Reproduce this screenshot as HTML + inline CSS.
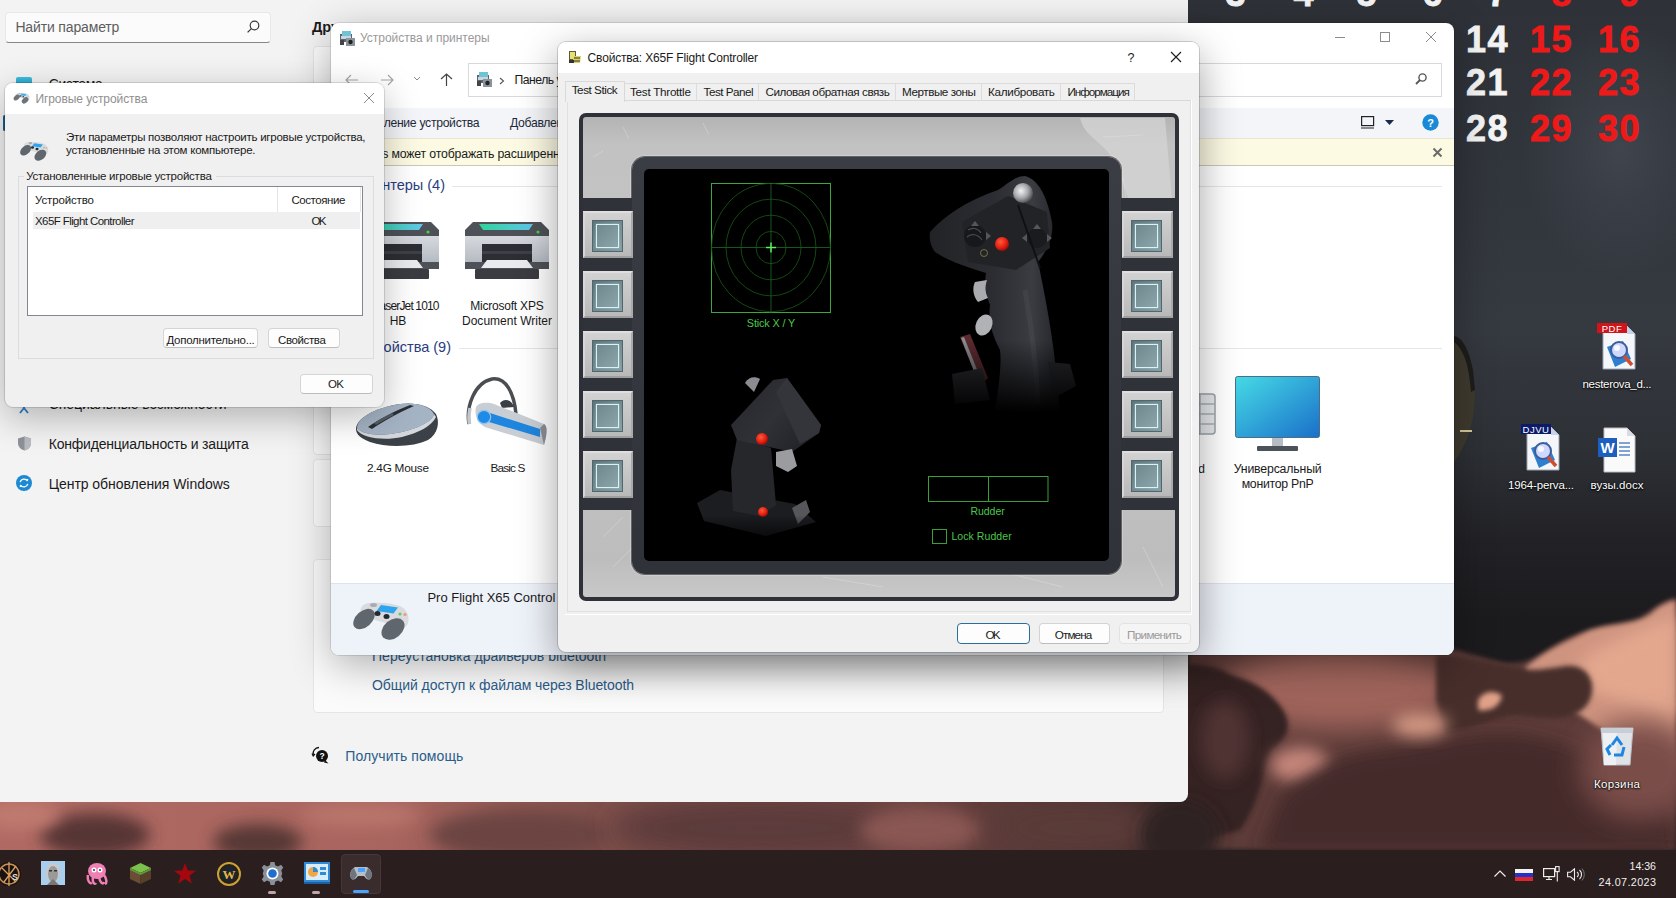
<!DOCTYPE html>
<html><head><meta charset="utf-8">
<style>
*{box-sizing:border-box;margin:0;padding:0}
html,body{width:1676px;height:898px;overflow:hidden}
body{position:relative;font-family:"Liberation Sans",sans-serif;background:#2c3036;color:#000}
.a{position:absolute}
.t{position:absolute;white-space:nowrap;line-height:1}
.win{position:absolute;overflow:hidden}
</style></head>
<body>
<div class="a" style="left:0;top:0;width:1676px;height:898px;background:
 linear-gradient(180deg,#2e3238 0px,#31353c 200px,#353940 330px,#2d3035 450px,#222226 540px,#1b1a1d 620px,#1b1a1d 850px)"></div>
<div class="a" style="left:1520px;top:20px;width:200px;height:260px;background:radial-gradient(ellipse 50% 50% at 50% 50%,rgba(75,82,92,.55),rgba(75,82,92,0))"></div>
<svg class="a" style="left:0;top:560px" width="1676" height="290" viewBox="0 560 1676 290">
<defs>
<filter id="b1" x="-30%" y="-50%" width="160%" height="200%"><feGaussianBlur stdDeviation="8"/></filter>
<filter id="b2" x="-30%" y="-50%" width="160%" height="200%"><feGaussianBlur stdDeviation="2.5"/></filter>
<filter id="b3" x="-30%" y="-50%" width="160%" height="200%"><feGaussianBlur stdDeviation="14"/></filter>
</defs>
<!-- base cloud body right of settings -->
<path d="M1188 650 L1454 650 L1500 662 C1530 668 1545 650 1565 640 C1590 628 1620 624 1640 620 C1655 606 1668 600 1676 598 L1676 850 L1188 850Z" fill="#5c3b38" filter="url(#b2)"/>
<!-- upper salmon band under devices window -->
<ellipse cx="1340" cy="690" rx="120" ry="40" fill="#a0655c" filter="url(#b3)"/>
<!-- bright right cloud -->
<path d="M1525 668 C1545 650 1565 642 1590 630 C1615 622 1640 626 1655 610 C1665 602 1676 600 1676 600 L1676 770 C1650 760 1610 735 1580 715 C1555 700 1530 690 1525 668Z" fill="#cf9480" filter="url(#b2)"/>
<path d="M1580 660 C1610 640 1640 630 1676 615 L1676 720 C1650 712 1615 700 1590 690Z" fill="#e3a78e" filter="url(#b1)"/>
<!-- dark puffs middle right -->
<path d="M1454 655 L1520 668 C1535 672 1550 668 1565 666 C1580 664 1590 672 1592 684 C1594 700 1585 712 1570 716 C1550 722 1530 714 1510 716 C1490 720 1470 728 1445 735 L1436 700 L1436 655Z" fill="#472e2c" filter="url(#b2)"/>
<path d="M1478 700 C1484 690 1496 690 1502 696 C1500 706 1490 712 1478 710Z" fill="#e0a088" filter="url(#b2)"/>
<!-- left dark mass -->
<path d="M1170 665 C1205 662 1220 668 1232 675 C1250 680 1270 690 1282 708 C1292 722 1290 738 1272 750 C1262 770 1262 800 1240 830 L1170 850Z" fill="#352323" filter="url(#b2)"/>
<ellipse cx="1225" cy="740" rx="25" ry="40" fill="#4f3230" filter="url(#b1)"/>
<!-- pink middle gap -->
<ellipse cx="1300" cy="765" rx="30" ry="18" fill="#c4857a" filter="url(#b1)"/>
<!-- lower dark mass -->
<path d="M1282 795 C1300 780 1320 765 1345 758 C1370 750 1400 750 1425 745 C1450 740 1480 730 1520 735 C1560 740 1600 760 1640 780 C1660 795 1676 810 1676 850 L1260 850Z" fill="#452c2a" filter="url(#b1)"/>
<ellipse cx="1420" cy="725" rx="28" ry="12" fill="#d49984" filter="url(#b1)"/>
<ellipse cx="1640" cy="770" rx="60" ry="50" fill="#7a4e49" filter="url(#b3)"/>
<!-- bottom strip under settings -->
<linearGradient id="strip" x1="0" x2="1188" y1="0" y2="0" gradientUnits="userSpaceOnUse"><stop offset="0" stop-color="#b06a63"/><stop offset=".33" stop-color="#a8645e"/><stop offset=".5" stop-color="#80504b"/><stop offset=".75" stop-color="#704643"/><stop offset=".93" stop-color="#4a3230"/><stop offset="1" stop-color="#2e2224"/></linearGradient>
<rect x="0" y="802" width="1188" height="48" fill="url(#strip)"/>
<ellipse cx="95" cy="835" rx="55" ry="22" fill="#563634" filter="url(#b1)"/>
<ellipse cx="258" cy="842" rx="45" ry="18" fill="#573735" filter="url(#b1)"/>
<ellipse cx="20" cy="815" rx="40" ry="14" fill="#c07a70" filter="url(#b1)"/>
<ellipse cx="360" cy="815" rx="60" ry="12" fill="#b9766c" filter="url(#b1)"/>
<ellipse cx="520" cy="835" rx="90" ry="25" fill="#6c4442" filter="url(#b1)"/>
<ellipse cx="760" cy="828" rx="150" ry="30" fill="#5c3b3a" filter="url(#b3)"/>
<ellipse cx="920" cy="830" rx="60" ry="22" fill="#8a5652" filter="url(#b1)"/>
<ellipse cx="1080" cy="828" rx="90" ry="30" fill="#5a3a38" filter="url(#b3)"/>
<ellipse cx="1180" cy="835" rx="40" ry="35" fill="#2e2224" filter="url(#b1)"/>
</svg>
<svg class="a" style="left:1440px;top:320px;" width="50" height="160" viewBox="0 0 50 160"><path d="M14 16 C22 18 31 30 34.5 65 C36 95 30 120 14 142 Z" fill="#3f3a2e"/>
<path d="M14 16 C20 17 28 24 33 50 L35 70 L31 72 C29 45 24 30 14 22Z" fill="#1d1d1b"/>
<path d="M20 111 H32" stroke="#d6c89c" stroke-width="2"/></svg>
<div class="t" style="left:1225.5px;top:-30px;font-size:36px;line-height:48px;color:#f4f4f4;font-weight:bold;letter-spacing:1.5px;-webkit-text-stroke:0.8px #f4f4f4;">3</div>
<div class="t" style="left:1293.5px;top:-30px;font-size:36px;line-height:48px;color:#f4f4f4;font-weight:bold;letter-spacing:1.5px;-webkit-text-stroke:0.8px #f4f4f4;">4</div>
<div class="t" style="left:1356.5px;top:-30px;font-size:36px;line-height:48px;color:#f4f4f4;font-weight:bold;letter-spacing:1.5px;-webkit-text-stroke:0.8px #f4f4f4;">5</div>
<div class="t" style="left:1422.5px;top:-30px;font-size:36px;line-height:48px;color:#f4f4f4;font-weight:bold;letter-spacing:1.5px;-webkit-text-stroke:0.8px #f4f4f4;">6</div>
<div class="t" style="left:1487.5px;top:-30px;font-size:36px;line-height:48px;color:#f4f4f4;font-weight:bold;letter-spacing:1.5px;-webkit-text-stroke:0.8px #f4f4f4;">7</div>
<div class="t" style="left:1551.5px;top:-30px;font-size:36px;line-height:48px;color:#ee1a1a;font-weight:bold;letter-spacing:1.5px;-webkit-text-stroke:0.8px #ee1a1a;">8</div>
<div class="t" style="left:1619.5px;top:-30px;font-size:36px;line-height:48px;color:#ee1a1a;font-weight:bold;letter-spacing:1.5px;-webkit-text-stroke:0.8px #ee1a1a;">9</div>
<div class="t" style="left:1466.0px;top:16px;font-size:36px;line-height:48px;color:#f4f4f4;font-weight:bold;letter-spacing:1.5px;-webkit-text-stroke:0.8px #f4f4f4;">14</div>
<div class="t" style="left:1530.0px;top:16px;font-size:36px;line-height:48px;color:#ee1a1a;font-weight:bold;letter-spacing:1.5px;-webkit-text-stroke:0.8px #ee1a1a;">15</div>
<div class="t" style="left:1598.0px;top:16px;font-size:36px;line-height:48px;color:#ee1a1a;font-weight:bold;letter-spacing:1.5px;-webkit-text-stroke:0.8px #ee1a1a;">16</div>
<div class="t" style="left:1466.0px;top:59px;font-size:36px;line-height:48px;color:#f4f4f4;font-weight:bold;letter-spacing:1.5px;-webkit-text-stroke:0.8px #f4f4f4;">21</div>
<div class="t" style="left:1530.0px;top:59px;font-size:36px;line-height:48px;color:#ee1a1a;font-weight:bold;letter-spacing:1.5px;-webkit-text-stroke:0.8px #ee1a1a;">22</div>
<div class="t" style="left:1598.0px;top:59px;font-size:36px;line-height:48px;color:#ee1a1a;font-weight:bold;letter-spacing:1.5px;-webkit-text-stroke:0.8px #ee1a1a;">23</div>
<div class="t" style="left:1466.0px;top:105px;font-size:36px;line-height:48px;color:#f4f4f4;font-weight:bold;letter-spacing:1.5px;-webkit-text-stroke:0.8px #f4f4f4;">28</div>
<div class="t" style="left:1530.0px;top:105px;font-size:36px;line-height:48px;color:#ee1a1a;font-weight:bold;letter-spacing:1.5px;-webkit-text-stroke:0.8px #ee1a1a;">29</div>
<div class="t" style="left:1598.0px;top:105px;font-size:36px;line-height:48px;color:#ee1a1a;font-weight:bold;letter-spacing:1.5px;-webkit-text-stroke:0.8px #ee1a1a;">30</div>
<svg class="a" style="left:1595px;top:323px" width="46" height="48" viewBox="0 0 46 48">
<path d="M8 3 L32 3 L40 11 L40 46 L8 46Z" fill="#f4f6fa" stroke="#9aa4b4" stroke-width="1"/>
<path d="M32 3 L32 11 L40 11Z" fill="#c5d3ea"/>
<path d="M12 24 L28 18 L36 36 L20 44Z" fill="#2f7fd0"/>
<circle cx="24" cy="27" r="8" fill="#cfd8ff" stroke="#3e5c9a" stroke-width="2"/>
<circle cx="22" cy="25" r="3" fill="#fff" opacity=".8"/>
<path d="M29 33 L37 42" stroke="#d04e30" stroke-width="3.5"/>
<rect x="2" y="0" width="30" height="10" fill="#d0141a"/>
<text x="17" y="8.5" font-size="9.5" fill="#fff" text-anchor="middle" font-family="Liberation Sans" letter-spacing=".5">PDF</text>
</svg>
<svg class="a" style="left:1519px;top:424px" width="46" height="48" viewBox="0 0 46 48">
<path d="M8 3 L32 3 L40 11 L40 46 L8 46Z" fill="#f4f6fa" stroke="#9aa4b4" stroke-width="1"/>
<path d="M32 3 L32 11 L40 11Z" fill="#c5d3ea"/>
<path d="M12 24 L28 18 L36 36 L20 44Z" fill="#2f7fd0"/>
<circle cx="24" cy="27" r="8" fill="#cfd8ff" stroke="#3e5c9a" stroke-width="2"/>
<circle cx="22" cy="25" r="3" fill="#fff" opacity=".8"/>
<path d="M29 33 L37 42" stroke="#d04e30" stroke-width="3.5"/>
<rect x="2" y="0" width="30" height="10" fill="#0c1a6a"/>
<text x="17" y="8.5" font-size="9.5" fill="#fff" text-anchor="middle" font-family="Liberation Sans" letter-spacing=".5">DJVU</text>
</svg>
<svg class="a" style="left:1597px;top:427px" width="40" height="46" viewBox="0 0 40 46">
<path d="M7 1 L30 1 L38 9 L38 45 L7 45Z" fill="#fafafa" stroke="#b8bcc4" stroke-width="1"/>
<path d="M30 1 L30 9 L38 9Z" fill="#d8dce4"/>
<rect x="1" y="11" width="19" height="19" fill="#1d5fbf"/>
<text x="10.5" y="26" font-size="15" font-weight="bold" fill="#fff" text-anchor="middle" font-family="Liberation Sans">W</text>
<path d="M22 16 H33 M22 20 H33 M22 24 H33 M22 28 H33" stroke="#5a86c6" stroke-width="1.3"/>
</svg>
<div class="t" style="left:1582.5px;top:374px;font-size:11.5px;line-height:20px;color:#fff;letter-spacing:-0.299px;text-shadow:0 0 2px #000,0 1px 2px #000;">nesterova_d...</div>
<div class="t" style="left:1508.0px;top:475px;font-size:11.5px;line-height:20px;color:#fff;letter-spacing:-0.147px;text-shadow:0 0 2px #000,0 1px 2px #000;">1964-perva...</div>
<div class="t" style="left:1590.5px;top:475px;font-size:11.5px;line-height:20px;color:#fff;letter-spacing:0.046px;text-shadow:0 0 2px #000,0 1px 2px #000;">вузы.docx</div>
<svg class="a" style="left:1597px;top:725px" width="40" height="42" viewBox="0 0 40 42">
<path d="M4 3 L36 3 L33 40 L7 40Z" fill="#dfe3e8" stroke="#b9bfc6" stroke-width="1"/>
<path d="M4 3 L36 3 L35.5 8 L4.5 8Z" fill="#c8ced6"/>
<path d="M6 8 L20 8 L19 40 L7 40Z" fill="#eef1f4"/>
<path d="M15 20 L20 13 L25 20 M27 22 L25 30 L17 30 M13 30 L10 24 L14 20" stroke="#1f86e0" stroke-width="3" fill="none"/>
</svg>
<div class="t" style="left:1594.0px;top:774px;font-size:11.5px;line-height:20px;color:#fff;letter-spacing:0.366px;text-shadow:0 0 2px #000,0 1px 2px #000;">Корзина</div>
<div class="a" style="left:0px;top:850px;width:1676px;height:48px;background:#2b1e1e"></div>
<div class="a" style="left:341px;top:854px;width:40px;height:40px;background:#3a2c2c;border-radius:4px;border:1px solid #45383a"></div>
<div class="a" style="left:353px;top:890px;width:16px;height:3px;background:#4aa3ff;border-radius:2px"></div>
<div class="a" style="left:268px;top:891px;width:8px;height:3px;background:#bfa5a5;border-radius:2px"></div>
<div class="a" style="left:312px;top:891px;width:8px;height:3px;background:#bfa5a5;border-radius:2px"></div>
<svg class="a" style="left:0;top:860px" width="24" height="28" viewBox="0 0 24 28">
<circle cx="9" cy="14" r="12" fill="#1a1210"/><circle cx="9" cy="14" r="10" fill="none" stroke="#c59055" stroke-width="1.5"/>
<path d="M2 8 L16 22 M16 6 L4 22 M9 2 L9 26" stroke="#d9a062" stroke-width="1.3"/><text x="12" y="20" font-size="9" font-weight="bold" fill="#ddd" font-family="Liberation Sans">S</text></svg>
<svg class="a" style="left:41px;top:861px" width="24" height="24" viewBox="0 0 24 24">
<rect x="0" y="0" width="24" height="24" fill="#a9cfee"/><ellipse cx="12" cy="12" rx="7" ry="10" fill="#c9c9c9"/><ellipse cx="12" cy="13" rx="5" ry="8" fill="#9a9a9a"/><rect x="8" y="9" width="3" height="1.5" fill="#333"/><rect x="13" y="9" width="3" height="1.5" fill="#333"/><path d="M6 24 L12 18 L18 24Z" fill="#777"/></svg>
<svg class="a" style="left:85px;top:861px" width="24" height="24" viewBox="0 0 24 24">
<ellipse cx="12" cy="10" rx="9" ry="8" fill="#f07fb5"/><path d="M3 14 C2 20 5 23 7 22 M8 16 C7 22 10 24 11 22 M14 16 C15 22 18 24 19 21 M19 14 C22 18 22 22 20 23" stroke="#f07fb5" stroke-width="2.5" fill="none"/><circle cx="9" cy="9" r="2.5" fill="#fff"/><circle cx="15" cy="9" r="2.5" fill="#fff"/><circle cx="9" cy="9" r="1" fill="#333"/><circle cx="15" cy="9" r="1" fill="#333"/></svg>
<svg class="a" style="left:129px;top:862px" width="23" height="23" viewBox="0 0 23 23">
<path d="M11.5 1 L22 6 L11.5 11 L1 6Z" fill="#7cbf4c"/><path d="M1 6 L11.5 11 L11.5 22 L1 17Z" fill="#6b4d35"/><path d="M22 6 L11.5 11 L11.5 22 L22 17Z" fill="#574029"/><path d="M1 6 L11.5 11 L22 6 L22 8 L11.5 13 L1 8Z" fill="#5e9c3a"/></svg>
<svg class="a" style="left:173px;top:862px" width="24" height="23" viewBox="0 0 24 23">
<path d="M12 1 L14.8 8.5 L23 8.7 L16.5 13.7 L18.9 21.5 L12 17 L5.1 21.5 L7.5 13.7 L1 8.7 L9.2 8.5Z" fill="#a3080e"/></svg>
<svg class="a" style="left:217px;top:862px" width="24" height="24" viewBox="0 0 24 24">
<circle cx="12" cy="12" r="11" fill="#2a2010" stroke="#c9a23a" stroke-width="2"/><circle cx="12" cy="12" r="8" fill="#1c2432"/><text x="12" y="17" font-size="13" font-weight="bold" fill="#e6b840" text-anchor="middle" font-family="Liberation Serif">W</text></svg>
<svg class="a" style="left:260px;top:861px" width="25" height="25" viewBox="0 0 25 25">
<path d="M10.5 1 H14.5 L15.2 4.3 L18 5.6 L21 3.8 L23.2 6.6 L21.3 9.4 L22.2 12.5 L21.3 15.6 L23.2 18.4 L21 21.2 L18 19.4 L15.2 20.7 L14.5 24 H10.5 L9.8 20.7 L7 19.4 L4 21.2 L1.8 18.4 L3.7 15.6 L2.8 12.5 L3.7 9.4 L1.8 6.6 L4 3.8 L7 5.6 L9.8 4.3Z" fill="#8a9099"/>
<circle cx="12.5" cy="12.5" r="6" fill="#fff"/><circle cx="12.5" cy="12.5" r="4.3" fill="#1f6fd0"/></svg>
<svg class="a" style="left:304px;top:862px" width="26" height="22" viewBox="0 0 26 22">
<rect x="0" y="0" width="26" height="20" fill="#2f8ad8"/><rect x="2" y="2" width="22" height="16" fill="#d8ecfa"/><circle cx="9" cy="10" r="5" fill="#f2a640"/><path d="M9 10 L9 5 A5 5 0 0 1 14 10Z" fill="#2f8ad8"/><rect x="16" y="5" width="6" height="3" fill="#2f8ad8"/><rect x="16" y="10" width="6" height="3" fill="#2f8ad8"/><rect x="0" y="20" width="26" height="2" fill="#1e5fa0"/></svg>
<svg class="a" style="left:349px;top:864px" width="24" height="18" viewBox="0 0 24 18">
<path d="M2 14 C0 10 2 5 6 3 L18 3 C22 5 24 10 22 14 C20 17 17 15 15 12 L9 12 C7 15 4 17 2 14Z" fill="#b8bec6"/>
<path d="M2 14 C0 10 2 6 5 4 L8 11 C6 15 4 17 2 14Z" fill="#6e757e"/><path d="M22 14 C24 10 22 6 19 4 L16 11 C18 15 20 17 22 14Z" fill="#6e757e"/>
<rect x="9" y="4" width="7" height="4" fill="#4aa3ff"/></svg>
<svg class="a" style="left:1493px;top:869px;" width="14" height="9" viewBox="0 0 14 9"><path d="M1.5 7.5 L7 2 L12.5 7.5" stroke="#eee" stroke-width="1.2" fill="none"/></svg>
<svg class="a" style="left:1515px;top:869px;" width="18" height="12" viewBox="0 0 18 12"><rect x="0" y="0" width="18" height="4" fill="#f4f4f4"/><rect x="0" y="4" width="18" height="4" fill="#2432c8"/><rect x="0" y="8" width="18" height="4" fill="#e0262e"/></svg>
<svg class="a" style="left:1543px;top:866px;" width="18" height="16" viewBox="0 0 18 16"><rect x="0.6" y="2.6" width="11" height="8" fill="none" stroke="#eee" stroke-width="1.2"/><path d="M3 13.5 H9 M6 10.6 V13.5" stroke="#eee" stroke-width="1.2"/><rect x="12.6" y="0.6" width="3.5" height="5" fill="none" stroke="#eee" stroke-width="1.1"/><path d="M14.3 5.6 V15.5" stroke="#eee" stroke-width="1.1"/></svg>
<svg class="a" style="left:1567px;top:868px;" width="18" height="13" viewBox="0 0 18 13"><path d="M0.6 4.2 H3.5 L7.5 0.8 V12.2 L3.5 8.8 H0.6Z" fill="none" stroke="#eee" stroke-width="1.1"/><path d="M10 4 A3 3 0 0 1 10 9 M12.5 2 A6 6 0 0 1 12.5 11" stroke="#eee" stroke-width="1.1" fill="none"/><path d="M15 0.5 A9 9 0 0 1 15 12.5" stroke="#777" stroke-width="1" fill="none"/></svg>
<div class="t" style="left:1629.5px;top:856px;font-size:10.6px;line-height:20px;color:#f0f0f0;letter-spacing:-0.007px;">14:36</div>
<div class="t" style="left:1598.5px;top:872px;font-size:10.8px;line-height:20px;color:#f0f0f0;letter-spacing:0.383px;">24.07.2023</div>
<div class="win" style="left:0;top:0;width:1188px;height:802px;background:#f3f3f3;border-bottom-right-radius:8px">
<div class="a" style="left:5px;top:12px;width:266px;height:31px;background:#fbfbfb;border:1px solid #e8e8e8;border-bottom:1px solid #868686;border-radius:4px"></div>
<div class="t" style="left:15.4px;top:17px;font-size:14px;line-height:20px;color:#5d5d5d;letter-spacing:-0.148px;">Найти параметр</div>
<svg class="a" style="left:244px;top:18px;" width="18" height="18" viewBox="0 0 18 18"><circle cx="10.5" cy="7.5" r="4.3" fill="none" stroke="#3a3a3a" stroke-width="1.2"/><line x1="7.4" y1="10.6" x2="3.6" y2="14.4" stroke="#3a3a3a" stroke-width="1.3"/></svg>
<div class="a" style="left:16px;top:77px;width:16px;height:12px;background:linear-gradient(180deg,#3cc0dd,#1b8cc6);border-radius:2px"></div>
<div class="t" style="left:48.7px;top:74px;font-size:14px;line-height:20px;color:#1b1b1b;letter-spacing:-0.397px;">Система</div>
<div class="a" style="left:3px;top:115px;width:3px;height:16px;background:#1f5c8c;border-radius:2px"></div>
<svg class="a" style="left:17px;top:398px;" width="14" height="16" viewBox="0 0 14 16"><circle cx="7" cy="3" r="2" fill="#2a7fc9"/><path d="M1 6 L13 6 M7 6 L7 10 L3 15 M7 10 L11 15" stroke="#2a7fc9" stroke-width="1.8" fill="none"/></svg>
<div class="t" style="left:48.7px;top:394px;font-size:14px;line-height:20px;color:#1b1b1b;letter-spacing:-0.033px;">Специальные возможности</div>
<svg class="a" style="left:17px;top:436px;" width="15" height="15" viewBox="0 0 15 15"><path d="M7.5 0.5 L14 2.5 L14 7 C14 11 11 13.5 7.5 14.5 C4 13.5 1 11 1 7 L1 2.5 Z" fill="#8e9298"/><path d="M7.5 0.5 L14 2.5 L14 7 C14 11 11 13.5 7.5 14.5 Z" fill="#b8bbbf"/></svg>
<div class="t" style="left:48.7px;top:434px;font-size:14px;line-height:20px;color:#1b1b1b;letter-spacing:-0.200px;">Конфиденциальность и защита</div>
<svg class="a" style="left:16px;top:475px;" width="16" height="16" viewBox="0 0 16 16"><circle cx="8" cy="8" r="8" fill="#1b8ad3"/><path d="M4.2 7.2 A4 4 0 0 1 11.5 6" stroke="#fff" stroke-width="1.4" fill="none"/><path d="M11.8 8.8 A4 4 0 0 1 4.5 10" stroke="#fff" stroke-width="1.4" fill="none"/><path d="M10 4.5 L12 6.5 L12.3 3.8Z M6 11.5 L4 9.5 L3.7 12.2Z" fill="#fff"/></svg>
<div class="t" style="left:48.7px;top:474px;font-size:14px;line-height:20px;color:#1b1b1b;letter-spacing:-0.051px;">Центр обновления Windows</div>
<div class="t" style="left:312.0px;top:17px;font-size:14.5px;line-height:20px;color:#1b1b1b;font-weight:bold;">Другие параметры</div>
<div class="a" style="left:313px;top:46px;width:851px;height:52px;background:#fbfbfb;border:1px solid #e5e5e5;border-radius:4px"></div>
<div class="a" style="left:313px;top:400px;width:851px;height:55px;background:#fbfbfb;border:1px solid #e5e5e5;border-radius:4px"></div>
<div class="a" style="left:313px;top:459px;width:851px;height:68px;background:#fbfbfb;border:1px solid #e5e5e5;border-radius:4px"></div>
<div class="a" style="left:313px;top:559px;width:851px;height:154px;background:#fbfbfb;border:1px solid #e5e5e5;border-radius:4px"></div>
<div class="t" style="left:372.0px;top:646px;font-size:14px;line-height:20px;color:#2b5d8b;letter-spacing:0.020px;">Переустановка драйверов bluetooth</div>
<div class="t" style="left:372.0px;top:675px;font-size:14px;line-height:20px;color:#2b5d8b;letter-spacing:-0.066px;">Общий доступ к файлам через Bluetooth</div>
<svg class="a" style="left:311px;top:746px;" width="19" height="19" viewBox="0 0 19 19"><path d="M8 1.5 A6 6 0 0 0 2.2 9" stroke="#111" stroke-width="1.3" fill="none"/><path d="M1 7.5 L2.2 10 L4 8" stroke="#111" stroke-width="1.2" fill="none"/><circle cx="11" cy="10" r="6" fill="#111"/><path d="M14 14 L17.5 17.5 L13 16.5Z" fill="#111"/><text x="11" y="13.3" font-size="8.5" font-weight="bold" fill="#fff" text-anchor="middle" font-family="Liberation Sans">?</text></svg>
<div class="t" style="left:345.3px;top:746px;font-size:14px;line-height:20px;color:#2b5d8b;letter-spacing:0.071px;">Получить помощь</div>
</div>
<div class="win" style="left:331px;top:23px;width:1123px;height:632px;background:#fff;border-radius:8px;box-shadow:0 10px 40px rgba(0,0,0,.30),0 0 0 1px rgba(0,0,0,.10)">
<div class="a" style="left:0;top:0;width:1676px;height:898px;transform:translate(-331px,-23px)">
<svg class="a" style="left:339px;top:30px;" width="17" height="16" viewBox="0 0 17 16"><rect x="1" y="4" width="12" height="8" fill="#5b6470"/><rect x="3" y="1" width="9" height="5" fill="#6fc3d7"/><rect x="2" y="6" width="10" height="3" fill="#cdd5dc"/><rect x="7" y="8" width="9" height="8" fill="#8a939c"/><circle cx="11.5" cy="12" r="2.2" fill="#222"/><rect x="1" y="10" width="4" height="5" fill="#444"/></svg>
<div class="t" style="left:360.0px;top:28px;font-size:12px;line-height:20px;color:#9a9a9a;letter-spacing:-0.019px;">Устройства и принтеры</div>
<div class="a" style="left:1335px;top:37px;width:10px;height:1px;background:#8c8c8c"></div>
<div class="a" style="left:1380px;top:32px;width:10px;height:10px;border:1px solid #8c8c8c"></div>
<svg class="a" style="left:1425px;top:31px;" width="12" height="12" viewBox="0 0 12 12"><path d="M1 1 L11 11 M11 1 L1 11" stroke="#8c8c8c" stroke-width="1"/></svg>
<svg class="a" style="left:345px;top:74px;" width="14" height="12" viewBox="0 0 14 12"><path d="M6 1 L1 6 L6 11 M1 6 H13" stroke="#a6a6a6" stroke-width="1.2" fill="none"/></svg>
<svg class="a" style="left:380px;top:74px;" width="14" height="12" viewBox="0 0 14 12"><path d="M8 1 L13 6 L8 11 M13 6 H1" stroke="#a6a6a6" stroke-width="1.2" fill="none"/></svg>
<svg class="a" style="left:413px;top:76px;" width="8" height="6" viewBox="0 0 8 6"><path d="M1 1 L4 4 L7 1" stroke="#8a8a8a" stroke-width="1" fill="none"/></svg>
<svg class="a" style="left:440px;top:73px;" width="13" height="14" viewBox="0 0 13 14"><path d="M1 6 L6.5 1 L12 6 M6.5 1 V13" stroke="#444" stroke-width="1.2" fill="none"/></svg>
<div class="a" style="left:468px;top:63px;width:680px;height:34px;border:1px solid #d9d9d9;background:#fff"></div>
<svg class="a" style="left:476px;top:71px;" width="17" height="16" viewBox="0 0 17 16"><rect x="1" y="4" width="12" height="8" fill="#5b6470"/><rect x="3" y="1" width="9" height="5" fill="#6fc3d7"/><rect x="2" y="6" width="10" height="3" fill="#cdd5dc"/><rect x="7" y="8" width="9" height="8" fill="#8a939c"/><circle cx="11.5" cy="12" r="2.2" fill="#222"/><rect x="1" y="10" width="4" height="5" fill="#444"/></svg>
<svg class="a" style="left:499px;top:77px;" width="6" height="8" viewBox="0 0 6 8"><path d="M1 1 L4.5 4 L1 7" stroke="#555" stroke-width="1.1" fill="none"/></svg>
<div class="t" style="left:514.6px;top:70px;font-size:12.2px;line-height:20px;color:#1a1a1a;letter-spacing:-0.520px;">Панель управления</div>
<div class="a" style="left:1160px;top:63px;width:282px;height:34px;border:1px solid #d9d9d9;background:#fff"></div>
<svg class="a" style="left:1414px;top:72px;" width="14" height="14" viewBox="0 0 14 14"><circle cx="8.5" cy="5.5" r="3.6" fill="none" stroke="#555" stroke-width="1.4"/><path d="M6 8 L2 12" stroke="#555" stroke-width="1.8"/></svg>
<div class="a" style="left:331px;top:108px;width:1123px;height:30px;background:#f3f5f8"></div>
<div class="t" style="left:350.3px;top:113px;font-size:12.2px;line-height:20px;color:#1e2a3a;letter-spacing:-0.300px;">Добавление устройства</div>
<div class="t" style="left:510.0px;top:113px;font-size:12.2px;line-height:20px;color:#1e2a3a;letter-spacing:-0.309px;">Добавление принтера</div>
<svg class="a" style="left:1361px;top:116px;" width="14" height="13" viewBox="0 0 14 13"><rect x="0.6" y="0.6" width="12" height="9" fill="none" stroke="#222" stroke-width="1.2"/><path d="M0 12 H13" stroke="#222" stroke-width="1.2"/></svg>
<svg class="a" style="left:1385px;top:120px;" width="9" height="6" viewBox="0 0 9 6"><path d="M0 0 H9 L4.5 5Z" fill="#1a2a4a"/></svg>
<svg class="a" style="left:1422px;top:114px;" width="17" height="17" viewBox="0 0 17 17"><circle cx="8.5" cy="8.5" r="8.2" fill="#1a8ad6"/><text x="8.5" y="13" font-size="11" font-weight="bold" fill="#fff" text-anchor="middle" font-family="Liberation Sans">?</text></svg>
<div class="a" style="left:331px;top:138px;width:1123px;height:28px;background:#fcfae3;border-bottom:1px solid #c9c7b6;border-top:1px solid #e8e6d0"></div>
<div class="t" style="left:339.5px;top:144px;font-size:12.3px;line-height:20px;color:#1a1a1a;letter-spacing:-0.166px;">Windows может отображать расширенные сведения об устройствах</div>
<svg class="a" style="left:1432px;top:147px;" width="11" height="11" viewBox="0 0 11 11"><path d="M1.5 1.5 L9.5 9.5 M9.5 1.5 L1.5 9.5" stroke="#6a6a6a" stroke-width="2"/></svg>
<div class="t" style="left:355.6px;top:175px;font-size:14.5px;line-height:20px;color:#2a3d80;">Принтеры (4)</div>
<div class="a" style="left:452px;top:186px;width:990px;height:1px;background:#e3e6ea"></div>
<div class="t" style="left:353.4px;top:337px;font-size:14.5px;line-height:20px;color:#2a3d80;">Устройства (9)</div>
<div class="a" style="left:459px;top:348px;width:983px;height:1px;background:#e3e6ea"></div>
<svg class="a" style="left:355px;top:222px;" width="84" height="58" viewBox="0 0 84 58">
<defs><linearGradient id="pslot" x1="0" x2="1"><stop offset="0" stop-color="#2fd29a"/><stop offset="1" stop-color="#62c7ea"/></linearGradient>
<linearGradient id="pbody" x1="0" x2="0" y1="0" y2="1"><stop offset="0" stop-color="#d6dadf"/><stop offset="1" stop-color="#b5bbc2"/></linearGradient></defs>
<path d="M8 0 H76 L84 8 V14 H0 V8Z" fill="#4e5157"/>
<path d="M14 2 H68 L64 8 H18Z" fill="url(#pslot)"/>
<circle cx="73" cy="10" r="1.6" fill="#3fd24a"/>
<rect x="0" y="14" width="84" height="26" fill="url(#pbody)"/>
<rect x="17" y="22" width="50" height="18" fill="#2c2e33"/>
<rect x="17" y="29" width="50" height="3" fill="#3d4046"/>
<rect x="0" y="40" width="84" height="7" fill="#4e5157"/>
<path d="M22 38 H62 L68 46 H16Z" fill="#e9ebee"/>
<rect x="10" y="47" width="64" height="10" rx="1" fill="#3a3c41"/>
</svg>
<svg class="a" style="left:465px;top:222px;" width="84" height="58" viewBox="0 0 84 58">
<defs><linearGradient id="pslot" x1="0" x2="1"><stop offset="0" stop-color="#2fd29a"/><stop offset="1" stop-color="#62c7ea"/></linearGradient>
<linearGradient id="pbody" x1="0" x2="0" y1="0" y2="1"><stop offset="0" stop-color="#d6dadf"/><stop offset="1" stop-color="#b5bbc2"/></linearGradient></defs>
<path d="M8 0 H76 L84 8 V14 H0 V8Z" fill="#4e5157"/>
<path d="M14 2 H68 L64 8 H18Z" fill="url(#pslot)"/>
<circle cx="73" cy="10" r="1.6" fill="#3fd24a"/>
<rect x="0" y="14" width="84" height="26" fill="url(#pbody)"/>
<rect x="17" y="22" width="50" height="18" fill="#2c2e33"/>
<rect x="17" y="29" width="50" height="3" fill="#3d4046"/>
<rect x="0" y="40" width="84" height="7" fill="#4e5157"/>
<path d="M22 38 H62 L68 46 H16Z" fill="#e9ebee"/>
<rect x="10" y="47" width="64" height="10" rx="1" fill="#3a3c41"/>
</svg>
<div class="t" style="left:356.5px;top:296px;font-size:12px;line-height:20px;color:#1a1a1a;letter-spacing:-0.856px;">HP LaserJet 1010</div>
<div class="t" style="left:389.7px;top:311px;font-size:12px;line-height:20px;color:#1a1a1a;">HB</div>
<div class="t" style="left:470.2px;top:296px;font-size:12px;line-height:20px;color:#1a1a1a;letter-spacing:-0.210px;">Microsoft XPS</div>
<div class="t" style="left:462.0px;top:311px;font-size:12px;line-height:20px;color:#1a1a1a;letter-spacing:0.014px;">Document Writer</div>
<svg class="a" style="left:354px;top:402px;" width="86" height="46" viewBox="0 0 86 46">
<path d="M2 27 C2 17 20 6 46 2 C62 0 76 4 82 12 C86 20 84 32 74 38 C60 45 34 46 16 40 C6 36 2 32 2 27Z" fill="#3c4148"/>
<path d="M3 26 C3 16 20 6 46 2 C62 0 76 4 80 12 C78 20 64 26 48 30 C30 34 10 34 3 26Z" fill="#a5b4c5"/>
<path d="M3 26 C10 34 30 34 48 30 C64 26 78 20 80 12 L82 15 C78 24 64 31 48 35 C30 39 8 36 3 28Z" fill="#d3d8de"/>
<path d="M14 25 C24 18 40 9 56 3 L60 4 C44 11 28 20 18 27Z" fill="#2b2f35"/>
<path d="M20 21 C26 17 32 14 38 11 L40 13 C34 16 28 19 22 23Z" fill="#565c64"/>
</svg>
<div class="t" style="left:367.0px;top:458px;font-size:11.8px;line-height:20px;color:#1a1a1a;letter-spacing:-0.253px;">2.4G Mouse</div>
<svg class="a" style="left:466px;top:377px;" width="82" height="70" viewBox="0 0 82 70">
<path d="M3 47 C0 30 8 6 26 2 C40 0 48 16 50 37" stroke="#4a4d52" stroke-width="3.5" fill="none"/>
<path d="M3.5 47 C2.5 42 3 36 4 31" stroke="#c2c6cb" stroke-width="3.5" fill="none"/>
<path d="M34 26 C38 21 45 22 48 30 L36 31Z" fill="#3b3e44"/>
<path d="M10 30 C13 25 22 25 28 27 L78 47 C81 49 81 53 80 60 L78 68 L22 51 C12 48 8 38 10 30Z" fill="#c9ced4"/>
<path d="M78 47 C81 49 81 53 80 60 L78 68 L74 51Z" fill="#8b9097"/>
<path d="M24 36 L74 52 L74 60 L23 45Z" fill="#1e86df"/>
<circle cx="18" cy="40" r="6.7" fill="#1e8be6" stroke="#8fc4f2" stroke-width="1.2"/>
</svg>
<div class="t" style="left:490.5px;top:458px;font-size:11.8px;line-height:20px;color:#1a1a1a;letter-spacing:-0.834px;">Basic S</div>
<svg class="a" style="left:1180px;top:393px;" width="36" height="42" viewBox="0 0 36 42"><rect x="1" y="1" width="34" height="40" rx="3" fill="#e6e8eb" stroke="#9ca2a9" stroke-width="1.5"/><path d="M1 11 H35 M1 21 H35 M1 31 H35 M20 1 V41" stroke="#a7adb4" stroke-width="1.5"/></svg>
<div class="t" style="left:1147.6px;top:459px;font-size:12px;line-height:20px;color:#1a1a1a;left:auto;right:471px">Keyboard</div>
<svg class="a" style="left:1235px;top:376px;" width="85" height="75" viewBox="0 0 85 75"><defs><linearGradient id="mscr" x1="0" y1="0" x2="1" y2="1"><stop offset="0" stop-color="#46dbe6"/><stop offset="1" stop-color="#1a6fc9"/></linearGradient></defs>
<rect x="0.5" y="0.5" width="84" height="61" rx="2" fill="url(#mscr)" stroke="#4a6f86" stroke-width="1"/>
<rect x="37" y="62" width="11" height="9" fill="#b6bcc3"/>
<rect x="22" y="70" width="41" height="5" rx="1" fill="#4c525a"/></svg>
<div class="t" style="left:1233.7px;top:459px;font-size:12.3px;line-height:20px;color:#1a1a1a;letter-spacing:-0.174px;">Универсальный</div>
<div class="t" style="left:1241.7px;top:474px;font-size:12.3px;line-height:20px;color:#1a1a1a;letter-spacing:-0.281px;">монитор PnP</div>
<div class="a" style="left:331px;top:583px;width:1123px;height:72px;background:#eef2f9;border-top:1px solid #dde3ec"></div>
<svg class="a" style="left:345px;top:595px;" width="70" height="55" viewBox="345 595 70 55">
<path d="M371 603 C380 602 392 603 400 606 C406 609 409 614 408.5 620 C408 626 405 629 400 627 L375 620 C366 618 358 614 361 608 C363 604 367 603 371 603Z" fill="#d9dbdf"/>
<ellipse cx="364" cy="619" rx="8" ry="12.5" transform="rotate(48 364 619)" fill="#5f666d"/>
<ellipse cx="393" cy="629" rx="9" ry="13" transform="rotate(50 393 629)" fill="#5f666d"/>
<path d="M381 605 L398 607.5 L393.5 613.5 L376.5 611Z" fill="#2ea3ef"/>
<ellipse cx="377.5" cy="613.5" rx="3" ry="2.5" fill="#26282c"/>
<ellipse cx="386.5" cy="616.5" rx="3" ry="2.5" fill="#26282c"/>
<ellipse cx="373.5" cy="605" rx="3.5" ry="2" fill="#a9adb2"/>
<circle cx="400" cy="614" r="1.6" fill="#6c6"/><circle cx="405" cy="614.5" r="1.6" fill="#e98"/></svg>
<div class="t" style="left:427.4px;top:588px;font-size:13px;line-height:20px;color:#1a1a1a;">Pro Flight X65 Control Panel</div>
</div></div>
<div class="win" style="left:5px;top:83px;width:379px;height:324px;background:#f0f0f0;border-radius:8px;box-shadow:0 10px 36px rgba(0,0,0,.28),0 0 0 1px rgba(0,0,0,.12)">
<div class="a" style="left:0;top:0;width:1676px;height:898px;transform:translate(-5px,-83px)">
<div class="a" style="left:5px;top:83px;width:379px;height:31px;background:#fff"></div>
<svg class="a" style="left:13px;top:91px;opacity:.9" width="17" height="13" viewBox="351 599 59 40">
<path d="M371 603 C380 602 392 603 400 606 C406 609 409 614 408.5 620 C408 626 405 629 400 627 L375 620 C366 618 358 614 361 608 C363 604 367 603 371 603Z" fill="#d9dbdf"/>
<ellipse cx="364" cy="619" rx="8" ry="12.5" transform="rotate(48 364 619)" fill="#5f666d"/>
<ellipse cx="393" cy="629" rx="9" ry="13" transform="rotate(50 393 629)" fill="#5f666d"/>
<path d="M381 605 L398 607.5 L393.5 613.5 L376.5 611Z" fill="#2ea3ef"/>
<ellipse cx="377.5" cy="613.5" rx="3" ry="2.5" fill="#26282c"/>
<ellipse cx="386.5" cy="616.5" rx="3" ry="2.5" fill="#26282c"/>
<ellipse cx="373.5" cy="605" rx="3.5" ry="2" fill="#a9adb2"/>
<circle cx="400" cy="614" r="1.6" fill="#6c6"/><circle cx="405" cy="614.5" r="1.6" fill="#e98"/></svg>
<div class="t" style="left:35.4px;top:89px;font-size:12px;line-height:20px;color:#8f8f8f;letter-spacing:-0.070px;">Игровые устройства</div>
<svg class="a" style="left:363px;top:92px;" width="12" height="12" viewBox="0 0 12 12"><path d="M1 1 L11 11 M11 1 L1 11" stroke="#8a8a8a" stroke-width="1"/></svg>
<svg class="a" style="left:19px;top:140px;" width="30" height="21" viewBox="351 599 59 41">
<path d="M371 603 C380 602 392 603 400 606 C406 609 409 614 408.5 620 C408 626 405 629 400 627 L375 620 C366 618 358 614 361 608 C363 604 367 603 371 603Z" fill="#d9dbdf"/>
<ellipse cx="364" cy="619" rx="8" ry="12.5" transform="rotate(48 364 619)" fill="#5f666d"/>
<ellipse cx="393" cy="629" rx="9" ry="13" transform="rotate(50 393 629)" fill="#5f666d"/>
<path d="M381 605 L398 607.5 L393.5 613.5 L376.5 611Z" fill="#2ea3ef"/>
<ellipse cx="377.5" cy="613.5" rx="3" ry="2.5" fill="#26282c"/>
<ellipse cx="386.5" cy="616.5" rx="3" ry="2.5" fill="#26282c"/>
<ellipse cx="373.5" cy="605" rx="3.5" ry="2" fill="#a9adb2"/>
<circle cx="400" cy="614" r="1.6" fill="#6c6"/><circle cx="405" cy="614.5" r="1.6" fill="#e98"/></svg>
<div class="t" style="left:66.0px;top:127px;font-size:11.5px;line-height:20px;color:#1a1a1a;letter-spacing:-0.251px;">Эти параметры позволяют настроить игровые устройства,</div>
<div class="t" style="left:66.0px;top:140px;font-size:11.5px;line-height:20px;color:#1a1a1a;letter-spacing:-0.232px;">установленные на этом компьютере.</div>
<div class="a" style="left:17.5px;top:176px;width:356px;height:183px;border:1px solid #dcdcdc"></div>
<div class="a" style="left:24px;top:170px;width:192px;height:12px;background:#f0f0f0"></div>
<div class="t" style="left:26.3px;top:166px;font-size:11.5px;line-height:20px;color:#1a1a1a;letter-spacing:-0.232px;">Установленные игровые устройства</div>
<div class="a" style="left:27px;top:186px;width:336px;height:130px;background:#fff;border:1px solid #828790"></div>
<div class="a" style="left:277px;top:187px;width:1px;height:25px;background:#e5e5e5"></div>
<div class="a" style="left:360px;top:187px;width:1px;height:25px;background:#e5e5e5"></div>
<div class="t" style="left:35.0px;top:190px;font-size:11.5px;line-height:20px;color:#1a1a1a;letter-spacing:-0.129px;">Устройство</div>
<div class="t" style="left:291.4px;top:190px;font-size:11.5px;line-height:20px;color:#1a1a1a;letter-spacing:-0.423px;">Состояние</div>
<div class="a" style="left:33px;top:212px;width:327px;height:17px;background:#efefef"></div>
<div class="t" style="left:35.0px;top:211px;font-size:11.5px;line-height:20px;color:#1a1a1a;letter-spacing:-0.588px;">X65F Flight Controller</div>
<div class="t" style="left:311.4px;top:211px;font-size:11.5px;line-height:20px;color:#1a1a1a;letter-spacing:-1.616px;">OK</div>
<div class="a" style="left:163px;top:328px;width:95px;height:20px;background:#fdfdfd;border:1px solid #d5d5d5;border-bottom-color:#bdbdbd;border-radius:4px"></div>
<div class="t" style="left:166.4px;top:330px;font-size:11.5px;line-height:20px;color:#1a1a1a;letter-spacing:-0.264px;">Дополнительно...</div>
<div class="a" style="left:267.5px;top:328px;width:72px;height:20px;background:#fdfdfd;border:1px solid #d5d5d5;border-bottom-color:#bdbdbd;border-radius:4px"></div>
<div class="t" style="left:278.0px;top:330px;font-size:11.5px;line-height:20px;color:#1a1a1a;letter-spacing:-0.385px;">Свойства</div>
<div class="a" style="left:300px;top:374px;width:72.5px;height:20px;background:#fdfdfd;border:1px solid #d5d5d5;border-bottom-color:#bdbdbd;border-radius:4px"></div>
<div class="t" style="left:328.0px;top:374px;font-size:11.5px;line-height:20px;color:#1a1a1a;letter-spacing:-0.616px;">OK</div>
</div></div>
<div class="win" style="left:558px;top:42px;width:641px;height:610px;background:#f0f0f0;border-radius:8px;box-shadow:0 12px 40px rgba(0,0,0,.38),0 0 0 1px rgba(0,0,0,.16)">
<div class="a" style="left:0;top:0;width:1676px;height:898px;transform:translate(-558px,-42px)">
<div class="a" style="left:558px;top:42px;width:641px;height:31px;background:#fff"></div>
<svg class="a" style="left:568px;top:50px;" width="14" height="14" viewBox="0 0 14 14"><rect x="1" y="1" width="7" height="9" fill="#5a5a3a"/><rect x="2" y="2" width="5" height="7" fill="#e8e070"/><path d="M6 6 L13 6 L12 13 L4 13Z" fill="#d9d160"/><path d="M6 8 L12 8 M5 11 L12 11" stroke="#333" stroke-width="1"/><rect x="1" y="10" width="5" height="3" fill="#333"/></svg>
<div class="t" style="left:587.6px;top:48px;font-size:12px;line-height:20px;color:#1a1a1a;letter-spacing:-0.180px;">Свойства: X65F Flight Controller</div>
<div class="t" style="left:1127.5px;top:48px;font-size:12.5px;line-height:20px;color:#1a1a1a;">?</div>
<svg class="a" style="left:1170px;top:51px;" width="12" height="12" viewBox="0 0 12 12"><path d="M1 1 L11 11 M11 1 L1 11" stroke="#1a1a1a" stroke-width="1.1"/></svg>
<div class="a" style="left:564.5px;top:100px;width:627px;height:515px;border-right:1px solid #fff;border-bottom:1px solid #fff"></div>
<div class="a" style="left:567px;top:100px;width:624px;height:512px;border:1px solid #e0e0e0;border-top-color:#d9d9d9;background:#f0f0f0"></div>
<div class="a" style="left:565px;top:80.5px;width:60px;height:21px;background:#f0f0f0;border:1px solid #d9d9d9;border-bottom:none"></div>
<div class="t" style="left:571.7px;top:80px;font-size:11.7px;line-height:20px;color:#1a1a1a;letter-spacing:-0.451px;">Test Stick</div>
<div class="a" style="left:625px;top:82.5px;width:72px;height:18.5px;background:#f0f0f0;border:1px solid #dcdcdc;border-left:none;border-bottom:1px solid #d9d9d9"></div>
<div class="t" style="left:630.0px;top:82px;font-size:11.7px;line-height:20px;color:#1a1a1a;letter-spacing:-0.264px;">Test Throttle</div>
<div class="a" style="left:697px;top:82.5px;width:62px;height:18.5px;background:#f0f0f0;border:1px solid #dcdcdc;border-left:none;border-bottom:1px solid #d9d9d9"></div>
<div class="t" style="left:703.6px;top:82px;font-size:11.7px;line-height:20px;color:#1a1a1a;letter-spacing:-0.515px;">Test Panel</div>
<div class="a" style="left:759px;top:82.5px;width:137px;height:18.5px;background:#f0f0f0;border:1px solid #dcdcdc;border-left:none;border-bottom:1px solid #d9d9d9"></div>
<div class="t" style="left:765.5px;top:82px;font-size:11.7px;line-height:20px;color:#1a1a1a;letter-spacing:-0.464px;">Силовая обратная связь</div>
<div class="a" style="left:896px;top:82.5px;width:86px;height:18.5px;background:#f0f0f0;border:1px solid #dcdcdc;border-left:none;border-bottom:1px solid #d9d9d9"></div>
<div class="t" style="left:902.0px;top:82px;font-size:11.7px;line-height:20px;color:#1a1a1a;letter-spacing:-0.454px;">Мертвые зоны</div>
<div class="a" style="left:982px;top:82.5px;width:79px;height:18.5px;background:#f0f0f0;border:1px solid #dcdcdc;border-left:none;border-bottom:1px solid #d9d9d9"></div>
<div class="t" style="left:988.0px;top:82px;font-size:11.7px;line-height:20px;color:#1a1a1a;letter-spacing:-0.319px;">Калибровать</div>
<div class="a" style="left:1061px;top:82.5px;width:73.5px;height:18.5px;background:#f0f0f0;border:1px solid #dcdcdc;border-left:none;border-bottom:1px solid #d9d9d9"></div>
<div class="t" style="left:1067.4px;top:82px;font-size:11.7px;line-height:20px;color:#1a1a1a;letter-spacing:-1.004px;">Информация</div>
<div class="a" style="left:956.5px;top:623px;width:73.5px;height:21px;background:#fdfdfd;border:1.5px solid #2a6e99;border-radius:4px"></div>
<div class="t" style="left:985.5px;top:625px;font-size:11.7px;line-height:20px;color:#1a1a1a;letter-spacing:-1.905px;">OK</div>
<div class="a" style="left:1038.5px;top:623px;width:71.5px;height:21px;background:#fdfdfd;border:1px solid #d3d3d3;border-bottom-color:#bcbcbc;border-radius:4px"></div>
<div class="t" style="left:1054.8px;top:625px;font-size:11.7px;line-height:20px;color:#1a1a1a;letter-spacing:-0.896px;">Отмена</div>
<div class="a" style="left:1119px;top:623px;width:71.5px;height:21px;background:#f5f5f5;border:1px solid #e2e2e2;border-radius:4px"></div>
<div class="t" style="left:1127.0px;top:625px;font-size:11.7px;line-height:20px;color:#9a9a9a;letter-spacing:-0.682px;">Применить</div>
<div class="a" style="left:579px;top:113px;width:600px;height:488px;background:#2e3137;border-radius:7px"></div>
<div class="a" style="left:583px;top:117px;width:592px;height:480px;background:linear-gradient(180deg,#b4b4b4 0%,#c2c2c2 6%,#c4c4c4 50%,#bdbdbd 92%,#c8c8c8 100%);border-radius:3px"></div>
<svg class="a" style="left:583px;top:117px;" width="592" height="480" viewBox="0 0 592 480"><path d="M497 1 L582 1 L589 81 L545 81 C538 60 532 40 520 30 C510 20 500 15 497 1Z" fill="#d4d4d4" opacity=".75"/>
<g opacity=".35" stroke="#e8e8e8" stroke-width="1">
<path d="M10 40 L20 34 M40 10 L46 22 M120 6 L126 18 M520 20 L560 18 M540 60 L548 120 M570 200 L560 260 M20 420 L40 400 M30 450 L50 430 M240 460 L300 470 M420 455 L480 470 M560 430 L580 470"/>
</g>
</svg>
<div class="a" style="left:632px;top:157px;width:489px;height:417px;background:linear-gradient(180deg,#3a3d44,#2f3238);border-radius:13px;box-shadow:0 0 0 1px rgba(30,30,35,.6),0 0 0 2px rgba(230,230,230,.35)"></div>
<div class="a" style="left:583px;top:198px;width:49px;height:312px;background:#2f3238"></div>
<div class="a" style="left:1121px;top:198px;width:54px;height:312px;background:#2f3238"></div>
<div class="a" style="left:644px;top:169px;width:465px;height:392px;background:#000;border-radius:5px"></div>
<div class="a" style="left:583px;top:211px;width:50px;height:47px;background:linear-gradient(180deg,#d2d2d2,#b9b9b9);border-top:2px solid #dedede;border-left:2px solid #d6d6d6;border-right:2px solid #a9a9a9;border-bottom:2px solid #9f9f9f"></div>
<div class="a" style="left:592px;top:220px;width:31px;height:32px;background:linear-gradient(135deg,#5e7479,#86a0a6);border:1px solid #52676c"></div>
<div class="a" style="left:596px;top:224px;width:23px;height:24px;border:1.5px solid #d9f2f6;background:linear-gradient(135deg,#6f888d,#8ba5aa);box-shadow:0 0 2px rgba(200,240,255,.6)"></div>
<div class="a" style="left:1122px;top:211px;width:51px;height:47px;background:linear-gradient(180deg,#d2d2d2,#b9b9b9);border-top:2px solid #dedede;border-left:2px solid #d6d6d6;border-right:2px solid #a9a9a9;border-bottom:2px solid #9f9f9f"></div>
<div class="a" style="left:1131px;top:220px;width:31px;height:32px;background:linear-gradient(135deg,#5e7479,#86a0a6);border:1px solid #52676c"></div>
<div class="a" style="left:1135px;top:224px;width:23px;height:24px;border:1.5px solid #d9f2f6;background:linear-gradient(135deg,#6f888d,#8ba5aa);box-shadow:0 0 2px rgba(200,240,255,.6)"></div>
<div class="a" style="left:583px;top:271px;width:50px;height:47px;background:linear-gradient(180deg,#d2d2d2,#b9b9b9);border-top:2px solid #dedede;border-left:2px solid #d6d6d6;border-right:2px solid #a9a9a9;border-bottom:2px solid #9f9f9f"></div>
<div class="a" style="left:592px;top:280px;width:31px;height:32px;background:linear-gradient(135deg,#5e7479,#86a0a6);border:1px solid #52676c"></div>
<div class="a" style="left:596px;top:284px;width:23px;height:24px;border:1.5px solid #d9f2f6;background:linear-gradient(135deg,#6f888d,#8ba5aa);box-shadow:0 0 2px rgba(200,240,255,.6)"></div>
<div class="a" style="left:1122px;top:271px;width:51px;height:47px;background:linear-gradient(180deg,#d2d2d2,#b9b9b9);border-top:2px solid #dedede;border-left:2px solid #d6d6d6;border-right:2px solid #a9a9a9;border-bottom:2px solid #9f9f9f"></div>
<div class="a" style="left:1131px;top:280px;width:31px;height:32px;background:linear-gradient(135deg,#5e7479,#86a0a6);border:1px solid #52676c"></div>
<div class="a" style="left:1135px;top:284px;width:23px;height:24px;border:1.5px solid #d9f2f6;background:linear-gradient(135deg,#6f888d,#8ba5aa);box-shadow:0 0 2px rgba(200,240,255,.6)"></div>
<div class="a" style="left:583px;top:331px;width:50px;height:47px;background:linear-gradient(180deg,#d2d2d2,#b9b9b9);border-top:2px solid #dedede;border-left:2px solid #d6d6d6;border-right:2px solid #a9a9a9;border-bottom:2px solid #9f9f9f"></div>
<div class="a" style="left:592px;top:340px;width:31px;height:32px;background:linear-gradient(135deg,#5e7479,#86a0a6);border:1px solid #52676c"></div>
<div class="a" style="left:596px;top:344px;width:23px;height:24px;border:1.5px solid #d9f2f6;background:linear-gradient(135deg,#6f888d,#8ba5aa);box-shadow:0 0 2px rgba(200,240,255,.6)"></div>
<div class="a" style="left:1122px;top:331px;width:51px;height:47px;background:linear-gradient(180deg,#d2d2d2,#b9b9b9);border-top:2px solid #dedede;border-left:2px solid #d6d6d6;border-right:2px solid #a9a9a9;border-bottom:2px solid #9f9f9f"></div>
<div class="a" style="left:1131px;top:340px;width:31px;height:32px;background:linear-gradient(135deg,#5e7479,#86a0a6);border:1px solid #52676c"></div>
<div class="a" style="left:1135px;top:344px;width:23px;height:24px;border:1.5px solid #d9f2f6;background:linear-gradient(135deg,#6f888d,#8ba5aa);box-shadow:0 0 2px rgba(200,240,255,.6)"></div>
<div class="a" style="left:583px;top:391px;width:50px;height:47px;background:linear-gradient(180deg,#d2d2d2,#b9b9b9);border-top:2px solid #dedede;border-left:2px solid #d6d6d6;border-right:2px solid #a9a9a9;border-bottom:2px solid #9f9f9f"></div>
<div class="a" style="left:592px;top:400px;width:31px;height:32px;background:linear-gradient(135deg,#5e7479,#86a0a6);border:1px solid #52676c"></div>
<div class="a" style="left:596px;top:404px;width:23px;height:24px;border:1.5px solid #d9f2f6;background:linear-gradient(135deg,#6f888d,#8ba5aa);box-shadow:0 0 2px rgba(200,240,255,.6)"></div>
<div class="a" style="left:1122px;top:391px;width:51px;height:47px;background:linear-gradient(180deg,#d2d2d2,#b9b9b9);border-top:2px solid #dedede;border-left:2px solid #d6d6d6;border-right:2px solid #a9a9a9;border-bottom:2px solid #9f9f9f"></div>
<div class="a" style="left:1131px;top:400px;width:31px;height:32px;background:linear-gradient(135deg,#5e7479,#86a0a6);border:1px solid #52676c"></div>
<div class="a" style="left:1135px;top:404px;width:23px;height:24px;border:1.5px solid #d9f2f6;background:linear-gradient(135deg,#6f888d,#8ba5aa);box-shadow:0 0 2px rgba(200,240,255,.6)"></div>
<div class="a" style="left:583px;top:451px;width:50px;height:47px;background:linear-gradient(180deg,#d2d2d2,#b9b9b9);border-top:2px solid #dedede;border-left:2px solid #d6d6d6;border-right:2px solid #a9a9a9;border-bottom:2px solid #9f9f9f"></div>
<div class="a" style="left:592px;top:460px;width:31px;height:32px;background:linear-gradient(135deg,#5e7479,#86a0a6);border:1px solid #52676c"></div>
<div class="a" style="left:596px;top:464px;width:23px;height:24px;border:1.5px solid #d9f2f6;background:linear-gradient(135deg,#6f888d,#8ba5aa);box-shadow:0 0 2px rgba(200,240,255,.6)"></div>
<div class="a" style="left:1122px;top:451px;width:51px;height:47px;background:linear-gradient(180deg,#d2d2d2,#b9b9b9);border-top:2px solid #dedede;border-left:2px solid #d6d6d6;border-right:2px solid #a9a9a9;border-bottom:2px solid #9f9f9f"></div>
<div class="a" style="left:1131px;top:460px;width:31px;height:32px;background:linear-gradient(135deg,#5e7479,#86a0a6);border:1px solid #52676c"></div>
<div class="a" style="left:1135px;top:464px;width:23px;height:24px;border:1.5px solid #d9f2f6;background:linear-gradient(135deg,#6f888d,#8ba5aa);box-shadow:0 0 2px rgba(200,240,255,.6)"></div>
<svg class="a" style="left:711px;top:183px;" width="120" height="130" viewBox="0 0 120 130"><rect x="0.5" y="0.5" width="119" height="129" fill="none" stroke="#3aa83a" stroke-width="1"/>
<ellipse cx="60" cy="64.5" rx="15" ry="16.2" fill="none" stroke="#155015" stroke-width=".9"/><ellipse cx="60" cy="64.5" rx="30" ry="32.3" fill="none" stroke="#155015" stroke-width=".9"/><ellipse cx="60" cy="64.5" rx="45" ry="48.4" fill="none" stroke="#155015" stroke-width=".9"/><ellipse cx="60" cy="64.5" rx="59.5" ry="64.3" fill="none" stroke="#155015" stroke-width=".9"/>
<path d="M60 1 V129 M1 64.5 H119" stroke="#19601d" stroke-width=".9"/>
<path d="M55 64.5 H65 M60 59.5 V69.5" stroke="#5cf05c" stroke-width="1.5"/></svg>
<div class="t" style="left:746.8px;top:313px;font-size:10.8px;line-height:20px;color:#4cc84c;letter-spacing:-0.112px;">Stick X / Y</div>
<svg class="a" style="left:928px;top:476px;" width="121" height="26" viewBox="0 0 121 26"><rect x="0.5" y="0.5" width="119.5" height="25" fill="none" stroke="#3b9e3b" stroke-width="1"/><path d="M60.5 1 V25" stroke="#3b9e3b" stroke-width="1"/></svg>
<div class="t" style="left:970.4px;top:501px;font-size:10.5px;line-height:20px;color:#4cc84c;letter-spacing:-0.028px;">Rudder</div>
<svg class="a" style="left:932px;top:529px;" width="15" height="15" viewBox="0 0 15 15"><rect x="0.5" y="0.5" width="14" height="14" fill="none" stroke="#3b9e3b" stroke-width="1"/></svg>
<div class="t" style="left:951.4px;top:526px;font-size:10.5px;line-height:20px;color:#4cc84c;letter-spacing:0.076px;">Lock Rudder</div>
<svg class="a" style="left:900px;top:170px;" width="180" height="250" viewBox="900 170 180 250"><defs>
<linearGradient id="jg" x1="930" y1="0" x2="1058" y2="0" gradientUnits="userSpaceOnUse"><stop offset="0" stop-color="#222327"/><stop offset=".5" stop-color="#2c2d32"/><stop offset=".8" stop-color="#3a3c42"/><stop offset="1" stop-color="#24252a"/></linearGradient>
<linearGradient id="jfade" x1="0" y1="340" x2="0" y2="412" gradientUnits="userSpaceOnUse"><stop offset="0" stop-color="#000" stop-opacity="0"/><stop offset="1" stop-color="#000" stop-opacity="1"/></linearGradient>
<radialGradient id="knob" cx=".4" cy=".4" r=".6"><stop offset="0" stop-color="#f4f4f4"/><stop offset=".6" stop-color="#a4a6aa"/><stop offset="1" stop-color="#55575b"/></radialGradient>
<radialGradient id="red" cx=".4" cy=".35" r=".65"><stop offset="0" stop-color="#ff5a3a"/><stop offset=".7" stop-color="#e01a0e"/><stop offset="1" stop-color="#901008"/></radialGradient>
</defs>
<path d="M930 232 C945 215 968 200 998 190 C1008 184 1015 176 1025 176 C1040 180 1048 200 1052 222 C1054 238 1046 252 1038 262 C1044 290 1052 330 1056 370 L1060 412 L995 412 C998 390 1002 365 1000 350 C992 335 988 320 990 305 C986 295 984 285 986 273 C970 268 950 262 935 252 C930 245 929 238 930 232Z" fill="url(#jg)"/>
<path d="M962 222 L1008 196 L1047 212 L1050 248 L1016 270 L968 262 Z" fill="#222327"/>
<circle cx="975" cy="236" r="11" fill="#17181b"/>
<path d="M968 230 C972 227 978 228 981 233 M967 237 C971 233 978 234 982 240" stroke="#4a4b50" stroke-width="1.2" fill="none"/>
<path d="M975 221 L979 226 L971 226Z M991 236 L986 240 L986 232Z" fill="#55565b"/>
<circle cx="1037" cy="238" r="10" fill="#1a1b1e"/>
<path d="M1037 224 L1041 229 L1033 229Z M1052 238 L1047 242 L1047 234Z M1022 238 L1027 242 L1027 234Z" fill="#55565b"/>
<circle cx="1023" cy="193" r="10" fill="url(#knob)"/>
<circle cx="1002" cy="244" r="7" fill="url(#red)"/>
<circle cx="984" cy="253" r="3.5" fill="none" stroke="#7a7a45" stroke-width=".9"/>
<path d="M1018 205 L1040 268" stroke="#101113" stroke-width="2"/>
<path d="M975 282 C972 288 973 296 978 302 L988 298 C985 292 985 286 987 280Z" fill="#a9abaf"/>
<ellipse cx="984" cy="325" rx="8" ry="11" fill="#b0b2b5" transform="rotate(25 984 325)"/>
<path d="M960 337 L970 334 L988 378 L980 386Z" fill="#5a2a2e"/>
<path d="M961 338 L964 337 L982 382 L979 384Z" fill="#8a8c90"/>
<path d="M952 374 L982 368 L990 400 L955 404Z" fill="#2c2d31"/>
<path d="M1048 362 L1070 364 L1076 386 L1054 398Z" fill="#26272b"/>
<path d="M1025 290 C1032 330 1036 360 1038 405" stroke="#45474d" stroke-width="5" fill="none" opacity=".6"/>
<rect x="900" y="330" width="180" height="90" fill="url(#jfade)"/></svg>
<svg class="a" style="left:690px;top:370px;" width="140" height="180" viewBox="690 370 140 180"><defs>
<linearGradient id="tg" x1="730" y1="380" x2="820" y2="450" gradientUnits="userSpaceOnUse"><stop offset="0" stop-color="#26272b"/><stop offset=".5" stop-color="#303136"/><stop offset="1" stop-color="#1e1f23"/></linearGradient>
<radialGradient id="red2" cx=".4" cy=".35" r=".65"><stop offset="0" stop-color="#ff5a3a"/><stop offset=".7" stop-color="#e01a0e"/><stop offset="1" stop-color="#901008"/></radialGradient>
<linearGradient id="tfade" x1="0" y1="515" x2="0" y2="548" gradientUnits="userSpaceOnUse"><stop offset="0" stop-color="#000" stop-opacity="0"/><stop offset="1" stop-color="#000" stop-opacity="1"/></linearGradient>
</defs>
<path d="M697 503 L720 490 L795 504 L816 522 L766 536 L704 521Z" fill="#1c1d21"/>
<path d="M737 438 L771 448 L776 505 L760 516 L733 511 L731 470Z" fill="#26272b"/>
<path d="M731 425 L773 380 L787 378 L821 425 L819 433 L792 452 L737 440Z" fill="url(#tg)"/>
<path d="M787 378 L821 425 L819 433 L800 444 L776 392Z" fill="#34353b"/>
<path d="M745 383 C748 377 755 376 760 379 L754 392Z" fill="#8a8c90"/>
<circle cx="762" cy="439" r="6" fill="url(#red2)"/>
<path d="M776 452 L792 449 L797 466 L788 472 L776 466Z" fill="#9a9ca0"/>
<circle cx="763" cy="512" r="5" fill="url(#red2)"/>
<path d="M792 508 L806 500 L810 512 L798 524Z" fill="#55575b"/>
<rect x="690" y="510" width="140" height="40" fill="url(#tfade)"/></svg>
</div></div>
</body></html>
